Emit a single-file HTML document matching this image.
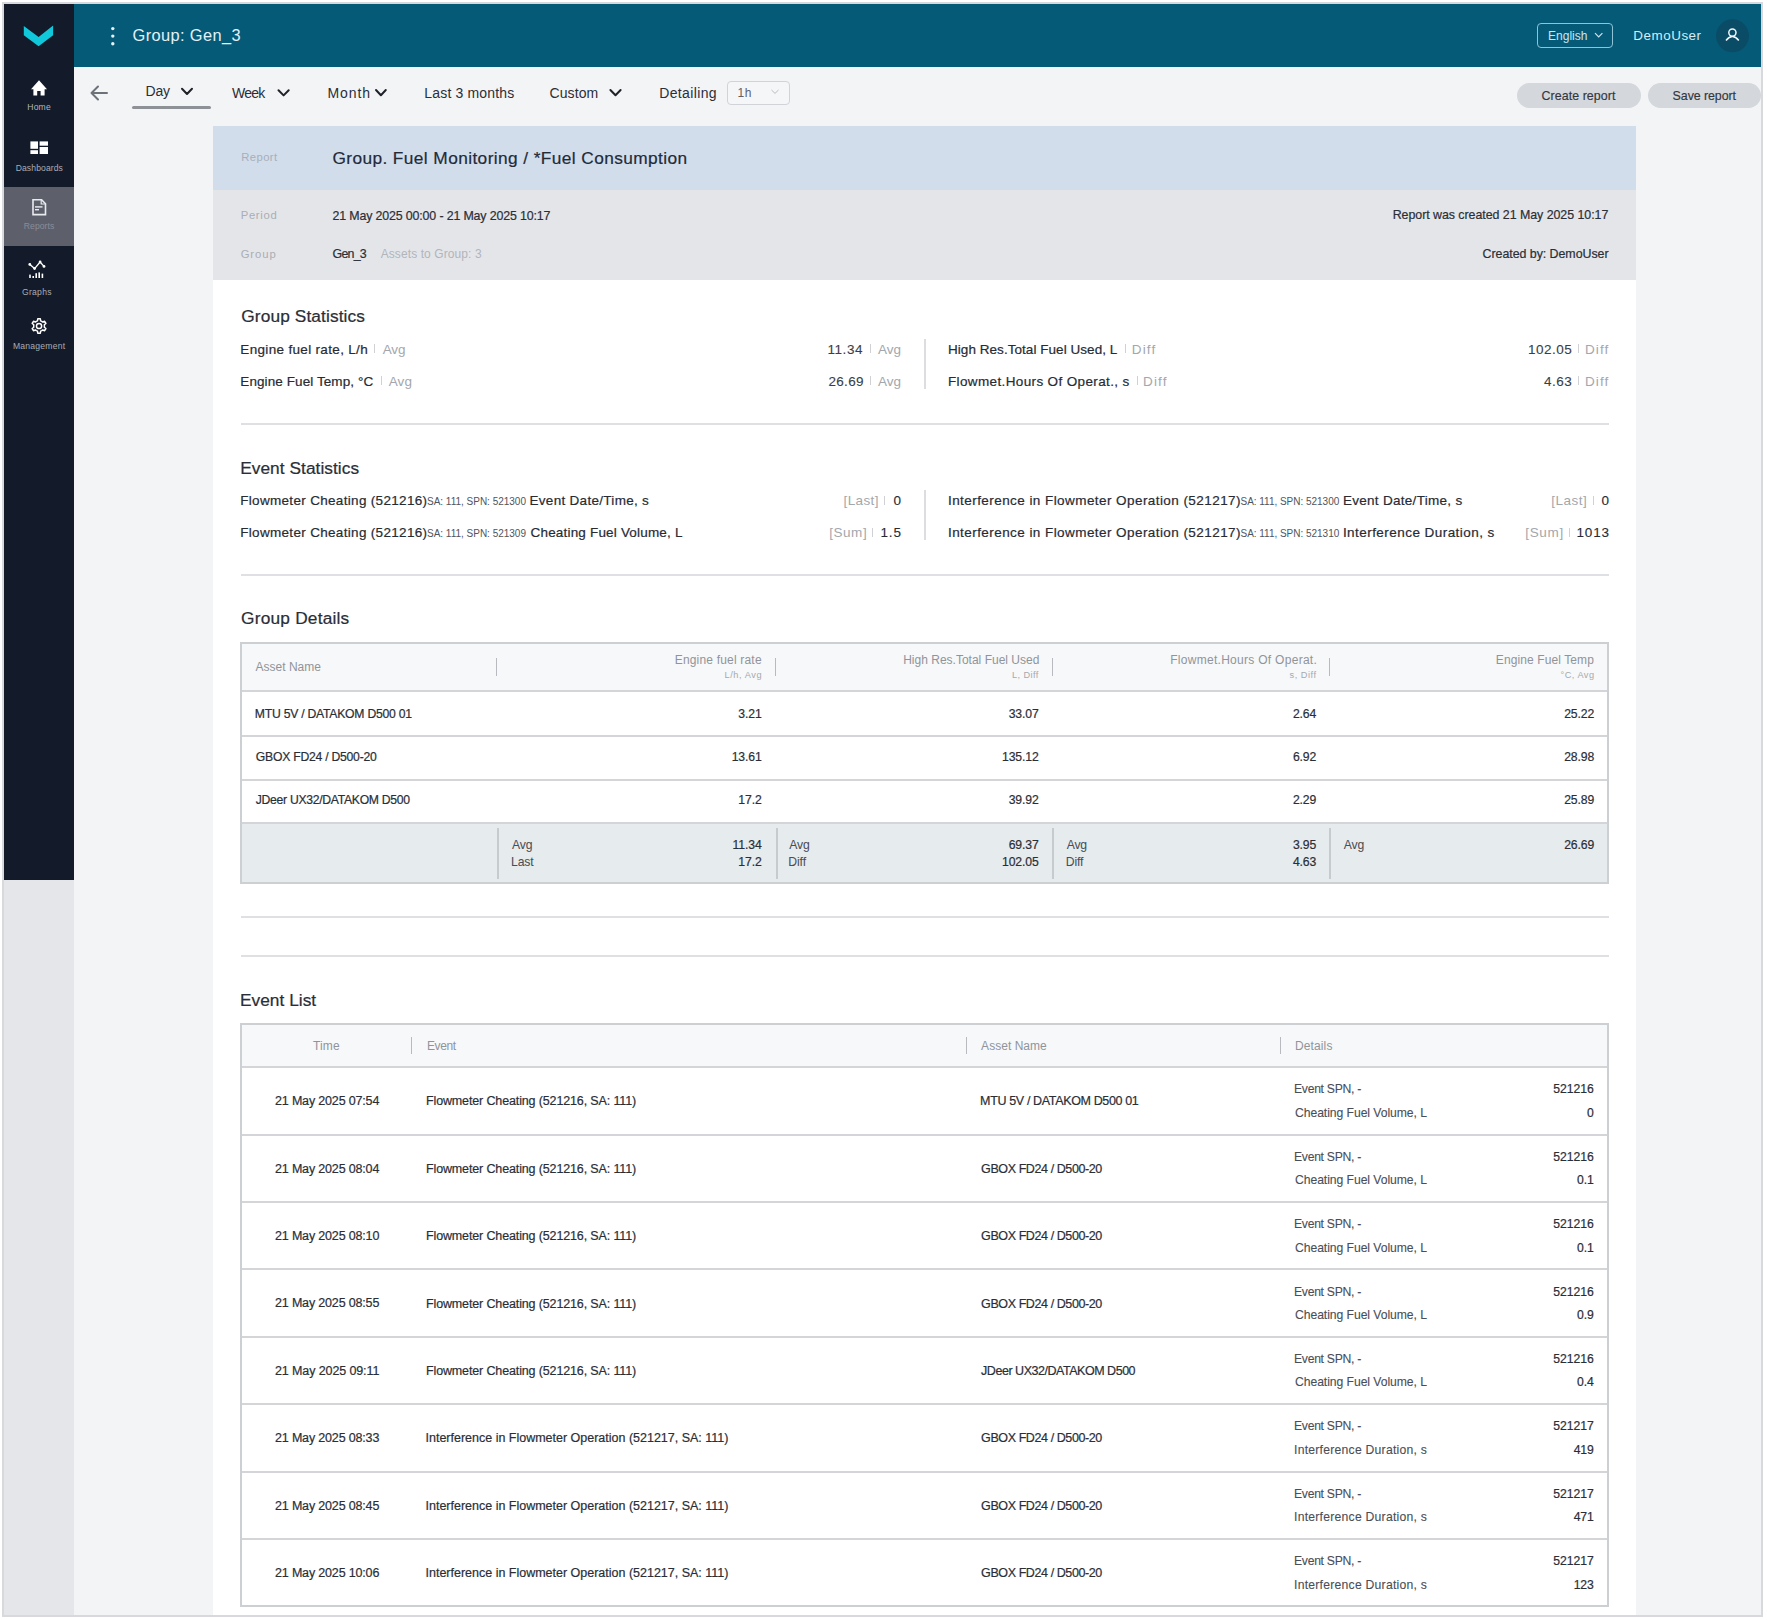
<!DOCTYPE html>
<html><head><meta charset="utf-8"><style>
html,body{margin:0;padding:0;}
body{width:1767px;height:1620px;position:relative;overflow:hidden;background:#fff;font-family:"Liberation Sans",sans-serif;}
.b{position:absolute;}
.t{position:absolute;white-space:pre;line-height:1;font-family:"Liberation Sans",sans-serif;}
.sep{position:absolute;width:1px;background:#cfd1d5;}
.hl{position:absolute;height:2px;background:#dfe0e3;}

</style></head><body>
<!-- frame -->
<div class=b style="left:2px;top:2px;width:1761px;height:1615px;background:#d8d9dc"></div>
<!-- page bg -->
<div class=b style="left:74px;top:67px;width:1687px;height:1548px;background:#f3f4f6"></div>
<!-- sidebar -->
<div class=b style="left:4px;top:4px;width:70px;height:876px;background:#131a29"></div>
<div class=b style="left:4px;top:880px;width:70px;height:735px;background:#e5e6ea"></div>
<div class=b style="left:4px;top:187px;width:70px;height:59px;background:#5d606b"></div>
<!-- header -->
<div class=b style="left:74px;top:4px;width:1687px;height:63px;background:#055a77"></div>
<!-- panel -->
<div class=b style="left:213px;top:126px;width:1423px;height:64px;background:#d2ddec"></div>
<div class=b style="left:213px;top:190px;width:1423px;height:90px;background:#e4e5e9"></div>
<div class=b style="left:213px;top:280px;width:1423px;height:1335px;background:#ffffff"></div>

<!-- logo -->
<svg class=b style="left:0;top:0" width="80" height="60"><polygon points="23.8,25.9 38.6,37 53.1,25.6 53.1,35.2 38.6,46.3 23.8,35.2" fill="#10c8da"/></svg>
<!-- sidebar icons -->
<svg class=b style="left:0;top:0" width="74" height="360">
 <g fill="#ffffff">
  <polygon points="31,89.2 39,80.2 47,89.2 44.6,89.2 44.6,95.4 40.6,95.4 40.6,91 37.2,91 37.2,95.4 33.4,95.4 33.4,89.2"/>
  <rect x="30.4" y="141.4" width="7.6" height="7.4"/>
  <rect x="30.4" y="150.2" width="7.6" height="3.8"/>
  <rect x="39.6" y="141.4" width="8.4" height="4.3"/>
  <rect x="39.6" y="147" width="8.4" height="7"/>
 </g>
 <g fill="none" stroke="#e9eaee" stroke-width="1.6">
  <path d="M33,199.8 H41.6 L45.5,203.8 V214.6 H33 Z"/>
  <path d="M41.2,200 V204 H45.3" stroke-width="1.2"/>
 </g>
 <g fill="#e9eaee"><rect x="35" y="206.2" width="7.5" height="1.4"/><rect x="35" y="209" width="4" height="1.4"/></g>
 <g fill="none" stroke="#ffffff" stroke-width="1.5" stroke-linecap="round" stroke-linejoin="round">
  <path d="M29.8,264.4 L34.6,268.6 L40.1,262 L44,266.4" stroke-width="1.3"/>
 </g>
 <g fill="#ffffff"><circle cx="29.8" cy="264.4" r="1.4"/><circle cx="34.6" cy="268.6" r="1.4"/><circle cx="40.1" cy="262" r="1.4"/><circle cx="44" cy="266.4" r="1.4"/></g>
 <g fill="#ffffff"><rect x="29.2" y="274.6" width="1.6" height="3.4"/><rect x="32.4" y="276" width="1.6" height="2"/><rect x="35.4" y="273.2" width="1.6" height="4.8"/><rect x="38.4" y="272.4" width="1.6" height="5.6"/><rect x="41.6" y="273.6" width="1.6" height="4.4"/></g>
 <g fill="none" stroke="#ffffff" stroke-width="1.5">
  <path d="M41.75,321.32 L40.63,320.84 L40.32,318.81 L37.78,318.81 L37.47,320.84 L36.35,321.32 L35.37,322.05 L33.46,321.31 L32.19,323.50 L33.79,324.79 L33.65,326.00 L33.79,327.21 L32.19,328.50 L33.46,330.69 L35.37,329.95 L36.35,330.68 L37.47,331.16 L37.78,333.19 L40.32,333.19 L40.63,331.16 L41.75,330.68 L42.73,329.95 L44.64,330.69 L45.91,328.50 L44.31,327.21 L44.45,326.00 L44.31,324.79 L45.91,323.50 L44.64,321.31 L42.73,322.05 Z" stroke-linejoin="round"/>
  <circle cx="39.05" cy="326" r="2.6"/>
 </g>
</svg>
<!-- kebab -->
<svg class=b style="left:100px;top:20px" width="30" height="30"><g fill="#e6f2f7"><circle cx="12.8" cy="8.6" r="1.7"/><circle cx="12.8" cy="16.1" r="1.7"/><circle cx="12.8" cy="23.7" r="1.7"/></g></svg>
<!-- english button -->
<div class=b style="left:1537px;top:23px;width:74px;height:23px;border:1.2px solid #8fc3d6;border-radius:4px"></div>
<svg class=b style="left:1590px;top:28px" width="16" height="16"><path d="M5,5.2 L8.7,9 L12.4,5.2" fill="none" stroke="#cde4ee" stroke-width="1.2"/></svg>
<!-- avatar -->
<svg class=b style="left:1710px;top:13px" width="46" height="46"><circle cx="22.5" cy="22.8" r="16.5" fill="#0a4c66"/><g fill="none" stroke="#f0f6f9" stroke-width="1.5"><circle cx="22.4" cy="19.6" r="3.6"/><path d="M16,27.4 Q22.4,19.8 28.8,27.4"/></g></svg>
<!-- toolbar -->
<svg class=b style="left:74px;top:60px" width="760" height="60">
 <g fill="none" stroke="#6d7178" stroke-width="2" stroke-linecap="round" stroke-linejoin="round"><path d="M33,33 H17.5 M24,26.5 L17.5,33 L24,39.5"/></g>
 <g fill="none" stroke="#1f2228" stroke-width="2" stroke-linecap="round" stroke-linejoin="round">
  <path d="M108,28.8 L113,34 L118,28.8"/>
  <path d="M204.5,30.2 L209.6,35.4 L214.7,30.2"/>
  <path d="M302,30 L306.9,35.2 L311.8,30"/>
  <path d="M536.4,30 L541.5,35.2 L546.6,30"/>
 </g>
</svg>
<div class=b style="left:132px;top:106px;width:79px;height:3px;border-radius:2px;background:#8e9196"></div>
<div class=b style="left:726.5px;top:80.5px;width:63px;height:24px;border:1px solid #d0d3d7;border-radius:4px;background:#f5f6f8;box-sizing:border-box"></div>
<svg class=b style="left:766px;top:86px" width="20" height="14"><path d="M5.5,4 L9,7.4 L12.5,4" fill="none" stroke="#b8bcc2" stroke-width="1"/></svg>
<div class=b style="left:1517px;top:83px;width:124px;height:25px;border-radius:13px;background:#d4d7db"></div>
<div class=b style="left:1648px;top:83px;width:113px;height:25px;border-radius:13px;background:#d4d7db"></div>

<!-- stats dividers & hrs -->
<div class=b style="left:924px;top:339px;width:2px;height:50px;background:#dcdde1"></div>
<div class=b style="left:924px;top:490px;width:2px;height:50px;background:#dcdde1"></div>
<div class=hl style="left:241px;top:423px;width:1368px"></div>
<div class=hl style="left:241px;top:574px;width:1368px"></div>
<div class=hl style="left:241px;top:916px;width:1368px"></div>
<div class=hl style="left:241px;top:955px;width:1368px"></div>

<!-- group details table -->
<div class=b style="left:240px;top:642px;width:1369px;height:242px;border:2px solid #cdd0d3;box-sizing:border-box;background:#fff"></div>
<div class=b style="left:242px;top:644px;width:1365px;height:46px;background:#f7f8f9"></div>
<div class=b style="left:242px;top:690px;width:1365px;height:2px;background:#d3d5d8"></div>
<div class=b style="left:242px;top:734.5px;width:1365px;height:2px;background:#d3d5d8"></div>
<div class=b style="left:242px;top:778.5px;width:1365px;height:2px;background:#d3d5d8"></div>
<div class=b style="left:242px;top:822px;width:1365px;height:2px;background:#d3d5d8"></div>
<div class=b style="left:242px;top:824px;width:1365px;height:58px;background:#e6ebee"></div>
<div class=sep style="left:496.3px;top:658px;height:18px;background:#b7bbc0"></div>
<div class=sep style="left:775.4px;top:658px;height:18px;background:#b7bbc0"></div>
<div class=sep style="left:1052.3px;top:658px;height:18px;background:#b7bbc0"></div>
<div class=sep style="left:1329px;top:658px;height:18px;background:#b7bbc0"></div>
<div class=b style="left:497px;top:828px;width:2px;height:51px;background:#c7cacf"></div>
<div class=b style="left:775.6px;top:828px;width:2px;height:51px;background:#c7cacf"></div>
<div class=b style="left:1052.3px;top:828px;width:2px;height:51px;background:#c7cacf"></div>
<div class=b style="left:1329.4px;top:828px;width:2px;height:51px;background:#c7cacf"></div>

<!-- event list table -->
<div class=b style="left:240px;top:1023px;width:1369px;height:584px;border:2px solid #cdd0d3;box-sizing:border-box;background:#fff"></div>
<div class=b style="left:242px;top:1025px;width:1365px;height:41px;background:#f7f8f9"></div>
<div class=b style="left:242px;top:1066px;width:1365px;height:2px;background:#d3d5d8"></div>
<div class=b style="left:242px;top:1133.5px;width:1365px;height:2px;background:#d3d5d8"></div>
<div class=b style="left:242px;top:1200.9px;width:1365px;height:2px;background:#d3d5d8"></div>
<div class=b style="left:242px;top:1268.3px;width:1365px;height:2px;background:#d3d5d8"></div>
<div class=b style="left:242px;top:1335.7px;width:1365px;height:2px;background:#d3d5d8"></div>
<div class=b style="left:242px;top:1403.1px;width:1365px;height:2px;background:#d3d5d8"></div>
<div class=b style="left:242px;top:1470.5px;width:1365px;height:2px;background:#d3d5d8"></div>
<div class=b style="left:242px;top:1537.9px;width:1365px;height:2px;background:#d3d5d8"></div>
<div class=sep style="left:411.2px;top:1037px;height:17px;background:#b7bbc0"></div>
<div class=sep style="left:966.4px;top:1037px;height:17px;background:#b7bbc0"></div>
<div class=sep style="left:1280.1px;top:1037px;height:17px;background:#b7bbc0"></div>

<div class=sep style="left:374.0px;top:344px;height:9px"></div><div class=sep style="left:869.9px;top:344px;height:9px"></div><div class=sep style="left:380.9px;top:376px;height:9px"></div><div class=sep style="left:869.9px;top:376px;height:9px"></div><div class=sep style="left:1124.5px;top:344px;height:9px"></div><div class=sep style="left:1577.5px;top:344px;height:9px"></div><div class=sep style="left:1136.5px;top:376px;height:9px"></div><div class=sep style="left:1577.5px;top:376px;height:9px"></div><div class=sep style="left:884.1px;top:495.8px;height:9.0px"></div><div class=sep style="left:872.3px;top:527.5px;height:9.0px"></div><div class=sep style="left:1592.8px;top:495.8px;height:9.0px"></div><div class=sep style="left:1569.3px;top:527.5px;height:9.0px"></div>
<span class=t style="left:27.30px;top:103.42px;font-size:8.6px;letter-spacing:0.152px;color:#b3b7bf;">Home</span>
<span class=t style="left:15.70px;top:163.72px;font-size:8.6px;letter-spacing:0.095px;color:#a9adb6;">Dashboards</span>
<span class=t style="left:23.80px;top:222.22px;font-size:8.6px;letter-spacing:0.068px;color:#898d98;">Reports</span>
<span class=t style="left:22.00px;top:287.52px;font-size:8.6px;letter-spacing:0.263px;color:#a9adb6;">Graphs</span>
<span class=t style="left:12.90px;top:341.92px;font-size:8.6px;letter-spacing:0.225px;color:#a9adb6;">Management</span>
<span class=t style="left:132.60px;top:26.92px;font-size:16.4px;letter-spacing:0.367px;color:#e3f1f7;">Group: Gen_3</span>
<span class=t style="left:1548.00px;top:29.74px;font-size:12px;letter-spacing:0.019px;color:#cde4ee;">English</span>
<span class=t style="left:1633.30px;top:28.86px;font-size:13.4px;letter-spacing:0.538px;color:#d8ecf4;">DemoUser</span>
<span class=t style="left:145.60px;top:83.85px;font-size:14px;letter-spacing:-0.248px;color:#2b2e36;">Day</span>
<span class=t style="left:232.00px;top:85.75px;font-size:14px;letter-spacing:-0.778px;color:#2b2e36;">Week</span>
<span class=t style="left:327.50px;top:86.15px;font-size:14px;letter-spacing:0.919px;color:#2b2e36;">Month</span>
<span class=t style="left:424.30px;top:86.15px;font-size:14px;letter-spacing:0.172px;color:#2b2e36;">Last 3 months</span>
<span class=t style="left:549.40px;top:86.15px;font-size:14px;letter-spacing:0.126px;color:#2b2e36;">Custom</span>
<span class=t style="left:659.20px;top:86.15px;font-size:14px;letter-spacing:0.364px;color:#2b2e36;">Detailing</span>
<span class=t style="left:737.60px;top:87.14px;font-size:12px;letter-spacing:0.526px;color:#5d6168;">1h</span>
<span class=t style="left:1541.60px;top:89.60px;font-size:12.4px;letter-spacing:0.062px;color:#33363d;-webkit-text-stroke:0.15px #33363d;">Create report</span>
<span class=t style="left:1672.60px;top:89.60px;font-size:12.4px;letter-spacing:-0.061px;color:#33363d;-webkit-text-stroke:0.15px #33363d;">Save report</span>
<span class=t style="left:241.20px;top:152.03px;font-size:11.3px;letter-spacing:0.406px;color:#a7afba;">Report</span>
<span class=t style="left:332.40px;top:149.96px;font-size:17.3px;letter-spacing:0.407px;color:#232a38;-webkit-text-stroke:0.2px #232a38;">Group. Fuel Monitoring / *Fuel Consumption</span>
<span class=t style="left:240.70px;top:209.93px;font-size:11.3px;letter-spacing:0.666px;color:#a9aeb5;">Period</span>
<span class=t style="left:332.50px;top:209.50px;font-size:12.4px;letter-spacing:-0.147px;color:#2a2e36;-webkit-text-stroke:0.2px #2a2e36;">21 May 2025 00:00 - 21 May 2025 10:17</span>
<span class=t style="left:240.70px;top:248.73px;font-size:11.3px;letter-spacing:0.896px;color:#a9aeb5;">Group</span>
<span class=t style="left:332.50px;top:247.70px;font-size:12.4px;letter-spacing:-0.753px;color:#2a2e36;-webkit-text-stroke:0.2px #2a2e36;">Gen_3</span>
<span class=t style="left:380.70px;top:248.04px;font-size:12px;letter-spacing:0.088px;color:#b1b5bb;">Assets to Group: 3</span>
<span class=t style="left:1392.70px;top:208.60px;font-size:12.4px;letter-spacing:-0.039px;color:#2a2e36;-webkit-text-stroke:0.2px #2a2e36;">Report was created 21 May 2025 10:17</span>
<span class=t style="left:1482.60px;top:247.70px;font-size:12.4px;letter-spacing:-0.041px;color:#2a2e36;-webkit-text-stroke:0.2px #2a2e36;">Created by: DemoUser</span>
<span class=t style="left:241.30px;top:307.96px;font-size:17.3px;letter-spacing:0.111px;color:#2a2e36;-webkit-text-stroke:0.22px #2a2e36;">Group Statistics</span>
<span class=t style="left:240.30px;top:342.77px;font-size:13.5px;letter-spacing:0.329px;color:#272b33;-webkit-text-stroke:0.2px #272b33;">Engine fuel rate, L/h</span>
<span class=t style="left:382.70px;top:342.77px;font-size:13.5px;letter-spacing:-0.155px;color:#a3a7ad;">Avg</span>
<span class=t style="left:827.40px;top:342.77px;font-size:13.5px;letter-spacing:0.582px;color:#3a3e46;-webkit-text-stroke:0.1px #3a3e46;">11.34</span>
<span class=t style="left:878.00px;top:342.77px;font-size:13.5px;letter-spacing:-0.005px;color:#a3a7ad;">Avg</span>
<span class=t style="left:240.30px;top:374.57px;font-size:13.5px;letter-spacing:0.089px;color:#272b33;-webkit-text-stroke:0.2px #272b33;">Engine Fuel Temp, °C</span>
<span class=t style="left:388.70px;top:374.57px;font-size:13.5px;letter-spacing:0.145px;color:#a3a7ad;">Avg</span>
<span class=t style="left:828.40px;top:374.57px;font-size:13.5px;letter-spacing:0.331px;color:#3a3e46;-webkit-text-stroke:0.1px #3a3e46;">26.69</span>
<span class=t style="left:878.00px;top:374.57px;font-size:13.5px;letter-spacing:-0.005px;color:#a3a7ad;">Avg</span>
<span class=t style="left:948.00px;top:342.77px;font-size:13.5px;letter-spacing:0.047px;color:#272b33;-webkit-text-stroke:0.2px #272b33;">High Res.Total Fuel Used, L</span>
<span class=t style="left:1131.80px;top:342.77px;font-size:13.5px;letter-spacing:1.115px;color:#a3a7ad;">Diff</span>
<span class=t style="left:1528.00px;top:342.77px;font-size:13.5px;letter-spacing:0.503px;color:#3a3e46;-webkit-text-stroke:0.1px #3a3e46;">102.05</span>
<span class=t style="left:1585.00px;top:342.77px;font-size:13.5px;letter-spacing:1.082px;color:#a3a7ad;">Diff</span>
<span class=t style="left:948.00px;top:374.57px;font-size:13.5px;letter-spacing:0.364px;color:#272b33;-webkit-text-stroke:0.2px #272b33;">Flowmet.Hours Of Operat., s</span>
<span class=t style="left:1143.00px;top:374.57px;font-size:13.5px;letter-spacing:1.148px;color:#a3a7ad;">Diff</span>
<span class=t style="left:1544.00px;top:374.57px;font-size:13.5px;letter-spacing:0.511px;color:#3a3e46;-webkit-text-stroke:0.1px #3a3e46;">4.63</span>
<span class=t style="left:1585.00px;top:374.57px;font-size:13.5px;letter-spacing:1.082px;color:#a3a7ad;">Diff</span>
<span class=t style="left:240.20px;top:459.96px;font-size:17.3px;letter-spacing:0.047px;color:#2a2e36;-webkit-text-stroke:0.22px #2a2e36;">Event Statistics</span>
<span class=t style="left:240.20px;top:493.87px;font-size:13.5px;letter-spacing:0.319px;color:#272b33;-webkit-text-stroke:0.2px #272b33;">Flowmeter Cheating (521216)</span>
<span class=t style="left:427.00px;top:496.84px;font-size:10px;letter-spacing:-0.009px;color:#50545c;">SA: 111, SPN: 521300</span>
<span class=t style="left:529.50px;top:493.87px;font-size:13.5px;letter-spacing:0.298px;color:#272b33;-webkit-text-stroke:0.2px #272b33;">Event Date/Time, s</span>
<span class=t style="left:843.50px;top:493.87px;font-size:13.5px;letter-spacing:0.386px;color:#a3a7ad;">[Last]</span>
<span class=t style="left:893.50px;top:493.87px;font-size:13.5px;letter-spacing:0.000px;color:#272b33;-webkit-text-stroke:0.1px #272b33;">0</span>
<span class=t style="left:240.20px;top:525.57px;font-size:13.5px;letter-spacing:0.319px;color:#272b33;-webkit-text-stroke:0.2px #272b33;">Flowmeter Cheating (521216)</span>
<span class=t style="left:427.00px;top:528.53px;font-size:10px;letter-spacing:-0.009px;color:#50545c;">SA: 111, SPN: 521309</span>
<span class=t style="left:530.50px;top:525.57px;font-size:13.5px;letter-spacing:0.185px;color:#272b33;-webkit-text-stroke:0.2px #272b33;">Cheating Fuel Volume, L</span>
<span class=t style="left:829.20px;top:525.57px;font-size:13.5px;letter-spacing:0.548px;color:#a3a7ad;">[Sum]</span>
<span class=t style="left:880.40px;top:525.57px;font-size:13.5px;letter-spacing:0.921px;color:#272b33;-webkit-text-stroke:0.1px #272b33;">1.5</span>
<span class=t style="left:948.00px;top:493.87px;font-size:13.5px;letter-spacing:0.433px;color:#272b33;-webkit-text-stroke:0.2px #272b33;">Interference in Flowmeter Operation (521217)</span>
<span class=t style="left:1240.50px;top:496.84px;font-size:10px;letter-spacing:-0.020px;color:#50545c;">SA: 111, SPN: 521300</span>
<span class=t style="left:1342.90px;top:493.87px;font-size:13.5px;letter-spacing:0.292px;color:#272b33;-webkit-text-stroke:0.2px #272b33;">Event Date/Time, s</span>
<span class=t style="left:1551.20px;top:493.87px;font-size:13.5px;letter-spacing:0.506px;color:#a3a7ad;">[Last]</span>
<span class=t style="left:1601.50px;top:493.87px;font-size:13.5px;letter-spacing:0.000px;color:#272b33;-webkit-text-stroke:0.1px #272b33;">0</span>
<span class=t style="left:948.00px;top:525.57px;font-size:13.5px;letter-spacing:0.433px;color:#272b33;-webkit-text-stroke:0.2px #272b33;">Interference in Flowmeter Operation (521217)</span>
<span class=t style="left:1240.50px;top:528.53px;font-size:10px;letter-spacing:-0.020px;color:#50545c;">SA: 111, SPN: 521310</span>
<span class=t style="left:1342.90px;top:525.57px;font-size:13.5px;letter-spacing:0.451px;color:#272b33;-webkit-text-stroke:0.2px #272b33;">Interference Duration, s</span>
<span class=t style="left:1525.20px;top:525.57px;font-size:13.5px;letter-spacing:0.698px;color:#a3a7ad;">[Sum]</span>
<span class=t style="left:1576.50px;top:525.57px;font-size:13.5px;letter-spacing:0.825px;color:#272b33;-webkit-text-stroke:0.1px #272b33;">1013</span>
<span class=t style="left:241.00px;top:610.36px;font-size:17.3px;letter-spacing:0.216px;color:#2a2e36;-webkit-text-stroke:0.22px #2a2e36;">Group Details</span>
<span class=t style="left:255.40px;top:661.04px;font-size:12px;letter-spacing:0.024px;color:#8f949b;">Asset Name</span>
<span class=t style="left:674.70px;top:654.04px;font-size:12px;letter-spacing:0.188px;color:#8f949b;">Engine fuel rate</span>
<span class=t style="left:724.50px;top:671.21px;font-size:9.2px;letter-spacing:0.567px;color:#a5a9af;">L/h, Avg</span>
<span class=t style="left:903.20px;top:654.04px;font-size:12px;letter-spacing:0.005px;color:#8f949b;">High Res.Total Fuel Used</span>
<span class=t style="left:1012.00px;top:671.21px;font-size:9.2px;letter-spacing:0.404px;color:#a5a9af;">L, Diff</span>
<span class=t style="left:1170.20px;top:654.04px;font-size:12px;letter-spacing:0.287px;color:#8f949b;">Flowmet.Hours Of Operat.</span>
<span class=t style="left:1289.60px;top:671.21px;font-size:9.2px;letter-spacing:0.523px;color:#a5a9af;">s, Diff</span>
<span class=t style="left:1495.80px;top:654.04px;font-size:12px;letter-spacing:0.104px;color:#8f949b;">Engine Fuel Temp</span>
<span class=t style="left:1560.60px;top:671.21px;font-size:9.2px;letter-spacing:0.472px;color:#a5a9af;">°C, Avg</span>
<span class=t style="left:254.80px;top:707.57px;font-size:12.2px;letter-spacing:-0.239px;color:#2a2e36;-webkit-text-stroke:0.2px #2a2e36;">MTU 5V / DATAKOM D500 01</span>
<span class=t style="left:738.35px;top:707.57px;font-size:12.2px;letter-spacing:-0.132px;color:#2a2e36;-webkit-text-stroke:0.2px #2a2e36;">3.21</span>
<span class=t style="left:1008.69px;top:707.57px;font-size:12.2px;letter-spacing:-0.127px;color:#2a2e36;-webkit-text-stroke:0.2px #2a2e36;">33.07</span>
<span class=t style="left:1292.95px;top:707.57px;font-size:12.2px;letter-spacing:-0.132px;color:#2a2e36;-webkit-text-stroke:0.2px #2a2e36;">2.64</span>
<span class=t style="left:1564.19px;top:707.57px;font-size:12.2px;letter-spacing:-0.127px;color:#2a2e36;-webkit-text-stroke:0.2px #2a2e36;">25.22</span>
<span class=t style="left:255.80px;top:750.57px;font-size:12.2px;letter-spacing:-0.241px;color:#2a2e36;-webkit-text-stroke:0.2px #2a2e36;">GBOX FD24 / D500-20</span>
<span class=t style="left:731.69px;top:750.57px;font-size:12.2px;letter-spacing:-0.127px;color:#2a2e36;-webkit-text-stroke:0.2px #2a2e36;">13.61</span>
<span class=t style="left:1002.02px;top:750.57px;font-size:12.2px;letter-spacing:-0.124px;color:#2a2e36;-webkit-text-stroke:0.2px #2a2e36;">135.12</span>
<span class=t style="left:1292.95px;top:750.57px;font-size:12.2px;letter-spacing:-0.132px;color:#2a2e36;-webkit-text-stroke:0.2px #2a2e36;">6.92</span>
<span class=t style="left:1564.19px;top:750.57px;font-size:12.2px;letter-spacing:-0.127px;color:#2a2e36;-webkit-text-stroke:0.2px #2a2e36;">28.98</span>
<span class=t style="left:255.80px;top:794.07px;font-size:12.2px;letter-spacing:-0.294px;color:#2a2e36;-webkit-text-stroke:0.2px #2a2e36;">JDeer UX32/DATAKOM D500</span>
<span class=t style="left:738.35px;top:794.07px;font-size:12.2px;letter-spacing:-0.132px;color:#2a2e36;-webkit-text-stroke:0.2px #2a2e36;">17.2</span>
<span class=t style="left:1008.69px;top:794.07px;font-size:12.2px;letter-spacing:-0.127px;color:#2a2e36;-webkit-text-stroke:0.2px #2a2e36;">39.92</span>
<span class=t style="left:1292.95px;top:794.07px;font-size:12.2px;letter-spacing:-0.132px;color:#2a2e36;-webkit-text-stroke:0.2px #2a2e36;">2.29</span>
<span class=t style="left:1564.19px;top:794.07px;font-size:12.2px;letter-spacing:-0.127px;color:#2a2e36;-webkit-text-stroke:0.2px #2a2e36;">25.89</span>
<span class=t style="left:512.00px;top:839.27px;font-size:12.2px;letter-spacing:-0.166px;color:#4a4e56;-webkit-text-stroke:0.05px #4a4e56;">Avg</span>
<span class=t style="left:732.58px;top:839.27px;font-size:12.2px;letter-spacing:-0.124px;color:#2a2e36;-webkit-text-stroke:0.2px #2a2e36;">11.34</span>
<span class=t style="left:511.00px;top:855.97px;font-size:12.2px;letter-spacing:-0.125px;color:#4a4e56;-webkit-text-stroke:0.05px #4a4e56;">Last</span>
<span class=t style="left:738.35px;top:855.97px;font-size:12.2px;letter-spacing:-0.132px;color:#2a2e36;-webkit-text-stroke:0.2px #2a2e36;">17.2</span>
<span class=t style="left:789.30px;top:839.27px;font-size:12.2px;letter-spacing:-0.166px;color:#4a4e56;-webkit-text-stroke:0.05px #4a4e56;">Avg</span>
<span class=t style="left:1008.69px;top:839.27px;font-size:12.2px;letter-spacing:-0.127px;color:#2a2e36;-webkit-text-stroke:0.2px #2a2e36;">69.37</span>
<span class=t style="left:788.30px;top:855.97px;font-size:12.2px;letter-spacing:-0.098px;color:#4a4e56;-webkit-text-stroke:0.05px #4a4e56;">Diff</span>
<span class=t style="left:1002.02px;top:855.97px;font-size:12.2px;letter-spacing:-0.124px;color:#2a2e36;-webkit-text-stroke:0.2px #2a2e36;">102.05</span>
<span class=t style="left:1066.70px;top:839.27px;font-size:12.2px;letter-spacing:-0.166px;color:#4a4e56;-webkit-text-stroke:0.05px #4a4e56;">Avg</span>
<span class=t style="left:1292.95px;top:839.27px;font-size:12.2px;letter-spacing:-0.132px;color:#2a2e36;-webkit-text-stroke:0.2px #2a2e36;">3.95</span>
<span class=t style="left:1065.70px;top:855.97px;font-size:12.2px;letter-spacing:-0.098px;color:#4a4e56;-webkit-text-stroke:0.05px #4a4e56;">Diff</span>
<span class=t style="left:1292.95px;top:855.97px;font-size:12.2px;letter-spacing:-0.132px;color:#2a2e36;-webkit-text-stroke:0.2px #2a2e36;">4.63</span>
<span class=t style="left:1343.80px;top:839.27px;font-size:12.2px;letter-spacing:-0.166px;color:#4a4e56;-webkit-text-stroke:0.05px #4a4e56;">Avg</span>
<span class=t style="left:1564.19px;top:839.27px;font-size:12.2px;letter-spacing:-0.127px;color:#2a2e36;-webkit-text-stroke:0.2px #2a2e36;">26.69</span>
<span class=t style="left:240.00px;top:991.56px;font-size:17.3px;letter-spacing:0.024px;color:#2a2e36;-webkit-text-stroke:0.22px #2a2e36;">Event List</span>
<span class=t style="left:313.00px;top:1039.64px;font-size:12px;letter-spacing:0.151px;color:#8f949b;">Time</span>
<span class=t style="left:427.00px;top:1039.64px;font-size:12px;letter-spacing:-0.413px;color:#8f949b;">Event</span>
<span class=t style="left:981.10px;top:1039.64px;font-size:12px;letter-spacing:0.035px;color:#8f949b;">Asset Name</span>
<span class=t style="left:1294.90px;top:1039.64px;font-size:12px;letter-spacing:0.137px;color:#8f949b;">Details</span>
<span class=t style="left:275.00px;top:1095.22px;font-size:12.5px;letter-spacing:-0.167px;color:#2a2e36;-webkit-text-stroke:0.2px #2a2e36;">21 May 2025 07:54</span>
<span class=t style="left:426.00px;top:1095.32px;font-size:12.5px;letter-spacing:-0.136px;color:#2a2e36;-webkit-text-stroke:0.2px #2a2e36;">Flowmeter Cheating (521216, SA: 111)</span>
<span class=t style="left:1295.00px;top:1106.77px;font-size:12.2px;letter-spacing:-0.068px;color:#4a4e56;-webkit-text-stroke:0.1px #4a4e56;">Cheating Fuel Volume, L</span>
<span class=t style="left:1553.20px;top:1083.37px;font-size:12.2px;letter-spacing:-0.018px;color:#2a2e36;-webkit-text-stroke:0.2px #2a2e36;">521216</span>
<span class=t style="left:980.10px;top:1095.32px;font-size:12.5px;letter-spacing:-0.360px;color:#2a2e36;-webkit-text-stroke:0.2px #2a2e36;">MTU 5V / DATAKOM D500 01</span>
<span class=t style="left:1294.00px;top:1083.37px;font-size:12.2px;letter-spacing:-0.289px;color:#4a4e56;-webkit-text-stroke:0.1px #4a4e56;">Event SPN, -</span>
<span class=t style="left:1587.00px;top:1106.77px;font-size:12.2px;letter-spacing:0.000px;color:#2a2e36;-webkit-text-stroke:0.2px #2a2e36;">0</span>
<span class=t style="left:275.00px;top:1162.62px;font-size:12.5px;letter-spacing:-0.167px;color:#2a2e36;-webkit-text-stroke:0.2px #2a2e36;">21 May 2025 08:04</span>
<span class=t style="left:426.00px;top:1162.72px;font-size:12.5px;letter-spacing:-0.136px;color:#2a2e36;-webkit-text-stroke:0.2px #2a2e36;">Flowmeter Cheating (521216, SA: 111)</span>
<span class=t style="left:1295.00px;top:1174.17px;font-size:12.2px;letter-spacing:-0.068px;color:#4a4e56;-webkit-text-stroke:0.1px #4a4e56;">Cheating Fuel Volume, L</span>
<span class=t style="left:1553.20px;top:1150.77px;font-size:12.2px;letter-spacing:-0.018px;color:#2a2e36;-webkit-text-stroke:0.2px #2a2e36;">521216</span>
<span class=t style="left:981.10px;top:1162.72px;font-size:12.5px;letter-spacing:-0.410px;color:#2a2e36;-webkit-text-stroke:0.2px #2a2e36;">GBOX FD24 / D500-20</span>
<span class=t style="left:1294.00px;top:1150.77px;font-size:12.2px;letter-spacing:-0.289px;color:#4a4e56;-webkit-text-stroke:0.1px #4a4e56;">Event SPN, -</span>
<span class=t style="left:1577.12px;top:1174.17px;font-size:12.2px;letter-spacing:-0.142px;color:#2a2e36;-webkit-text-stroke:0.2px #2a2e36;">0.1</span>
<span class=t style="left:275.00px;top:1230.02px;font-size:12.5px;letter-spacing:-0.167px;color:#2a2e36;-webkit-text-stroke:0.2px #2a2e36;">21 May 2025 08:10</span>
<span class=t style="left:426.00px;top:1230.12px;font-size:12.5px;letter-spacing:-0.136px;color:#2a2e36;-webkit-text-stroke:0.2px #2a2e36;">Flowmeter Cheating (521216, SA: 111)</span>
<span class=t style="left:1295.00px;top:1241.57px;font-size:12.2px;letter-spacing:-0.068px;color:#4a4e56;-webkit-text-stroke:0.1px #4a4e56;">Cheating Fuel Volume, L</span>
<span class=t style="left:1553.20px;top:1218.17px;font-size:12.2px;letter-spacing:-0.018px;color:#2a2e36;-webkit-text-stroke:0.2px #2a2e36;">521216</span>
<span class=t style="left:981.10px;top:1230.12px;font-size:12.5px;letter-spacing:-0.410px;color:#2a2e36;-webkit-text-stroke:0.2px #2a2e36;">GBOX FD24 / D500-20</span>
<span class=t style="left:1294.00px;top:1218.17px;font-size:12.2px;letter-spacing:-0.289px;color:#4a4e56;-webkit-text-stroke:0.1px #4a4e56;">Event SPN, -</span>
<span class=t style="left:1577.12px;top:1241.57px;font-size:12.2px;letter-spacing:-0.142px;color:#2a2e36;-webkit-text-stroke:0.2px #2a2e36;">0.1</span>
<span class=t style="left:275.00px;top:1297.42px;font-size:12.5px;letter-spacing:-0.167px;color:#2a2e36;-webkit-text-stroke:0.2px #2a2e36;">21 May 2025 08:55</span>
<span class=t style="left:426.00px;top:1297.52px;font-size:12.5px;letter-spacing:-0.136px;color:#2a2e36;-webkit-text-stroke:0.2px #2a2e36;">Flowmeter Cheating (521216, SA: 111)</span>
<span class=t style="left:1295.00px;top:1308.97px;font-size:12.2px;letter-spacing:-0.068px;color:#4a4e56;-webkit-text-stroke:0.1px #4a4e56;">Cheating Fuel Volume, L</span>
<span class=t style="left:1553.20px;top:1285.57px;font-size:12.2px;letter-spacing:-0.018px;color:#2a2e36;-webkit-text-stroke:0.2px #2a2e36;">521216</span>
<span class=t style="left:981.10px;top:1297.52px;font-size:12.5px;letter-spacing:-0.410px;color:#2a2e36;-webkit-text-stroke:0.2px #2a2e36;">GBOX FD24 / D500-20</span>
<span class=t style="left:1294.00px;top:1285.57px;font-size:12.2px;letter-spacing:-0.289px;color:#4a4e56;-webkit-text-stroke:0.1px #4a4e56;">Event SPN, -</span>
<span class=t style="left:1577.12px;top:1308.97px;font-size:12.2px;letter-spacing:-0.142px;color:#2a2e36;-webkit-text-stroke:0.2px #2a2e36;">0.9</span>
<span class=t style="left:275.00px;top:1364.82px;font-size:12.5px;letter-spacing:-0.109px;color:#2a2e36;-webkit-text-stroke:0.2px #2a2e36;">21 May 2025 09:11</span>
<span class=t style="left:426.00px;top:1364.92px;font-size:12.5px;letter-spacing:-0.136px;color:#2a2e36;-webkit-text-stroke:0.2px #2a2e36;">Flowmeter Cheating (521216, SA: 111)</span>
<span class=t style="left:1295.00px;top:1376.37px;font-size:12.2px;letter-spacing:-0.068px;color:#4a4e56;-webkit-text-stroke:0.1px #4a4e56;">Cheating Fuel Volume, L</span>
<span class=t style="left:1553.20px;top:1352.97px;font-size:12.2px;letter-spacing:-0.018px;color:#2a2e36;-webkit-text-stroke:0.2px #2a2e36;">521216</span>
<span class=t style="left:981.10px;top:1364.92px;font-size:12.5px;letter-spacing:-0.473px;color:#2a2e36;-webkit-text-stroke:0.2px #2a2e36;">JDeer UX32/DATAKOM D500</span>
<span class=t style="left:1294.00px;top:1352.97px;font-size:12.2px;letter-spacing:-0.289px;color:#4a4e56;-webkit-text-stroke:0.1px #4a4e56;">Event SPN, -</span>
<span class=t style="left:1577.12px;top:1376.37px;font-size:12.2px;letter-spacing:-0.142px;color:#2a2e36;-webkit-text-stroke:0.2px #2a2e36;">0.4</span>
<span class=t style="left:275.00px;top:1432.22px;font-size:12.5px;letter-spacing:-0.167px;color:#2a2e36;-webkit-text-stroke:0.2px #2a2e36;">21 May 2025 08:33</span>
<span class=t style="left:425.50px;top:1432.32px;font-size:12.5px;letter-spacing:-0.004px;color:#2a2e36;-webkit-text-stroke:0.2px #2a2e36;">Interference in Flowmeter Operation (521217, SA: 111)</span>
<span class=t style="left:1294.00px;top:1443.77px;font-size:12.2px;letter-spacing:0.241px;color:#4a4e56;-webkit-text-stroke:0.1px #4a4e56;">Interference Duration, s</span>
<span class=t style="left:1553.20px;top:1420.37px;font-size:12.2px;letter-spacing:-0.018px;color:#2a2e36;-webkit-text-stroke:0.2px #2a2e36;">521217</span>
<span class=t style="left:981.10px;top:1432.32px;font-size:12.5px;letter-spacing:-0.410px;color:#2a2e36;-webkit-text-stroke:0.2px #2a2e36;">GBOX FD24 / D500-20</span>
<span class=t style="left:1294.00px;top:1420.37px;font-size:12.2px;letter-spacing:-0.289px;color:#4a4e56;-webkit-text-stroke:0.1px #4a4e56;">Event SPN, -</span>
<span class=t style="left:1573.78px;top:1443.77px;font-size:12.2px;letter-spacing:-0.170px;color:#2a2e36;-webkit-text-stroke:0.2px #2a2e36;">419</span>
<span class=t style="left:275.00px;top:1499.62px;font-size:12.5px;letter-spacing:-0.167px;color:#2a2e36;-webkit-text-stroke:0.2px #2a2e36;">21 May 2025 08:45</span>
<span class=t style="left:425.50px;top:1499.72px;font-size:12.5px;letter-spacing:-0.004px;color:#2a2e36;-webkit-text-stroke:0.2px #2a2e36;">Interference in Flowmeter Operation (521217, SA: 111)</span>
<span class=t style="left:1294.00px;top:1511.17px;font-size:12.2px;letter-spacing:0.241px;color:#4a4e56;-webkit-text-stroke:0.1px #4a4e56;">Interference Duration, s</span>
<span class=t style="left:1553.20px;top:1487.77px;font-size:12.2px;letter-spacing:-0.018px;color:#2a2e36;-webkit-text-stroke:0.2px #2a2e36;">521217</span>
<span class=t style="left:981.10px;top:1499.72px;font-size:12.5px;letter-spacing:-0.410px;color:#2a2e36;-webkit-text-stroke:0.2px #2a2e36;">GBOX FD24 / D500-20</span>
<span class=t style="left:1294.00px;top:1487.77px;font-size:12.2px;letter-spacing:-0.289px;color:#4a4e56;-webkit-text-stroke:0.1px #4a4e56;">Event SPN, -</span>
<span class=t style="left:1573.78px;top:1511.17px;font-size:12.2px;letter-spacing:-0.170px;color:#2a2e36;-webkit-text-stroke:0.2px #2a2e36;">471</span>
<span class=t style="left:275.00px;top:1567.02px;font-size:12.5px;letter-spacing:-0.167px;color:#2a2e36;-webkit-text-stroke:0.2px #2a2e36;">21 May 2025 10:06</span>
<span class=t style="left:425.50px;top:1567.12px;font-size:12.5px;letter-spacing:-0.004px;color:#2a2e36;-webkit-text-stroke:0.2px #2a2e36;">Interference in Flowmeter Operation (521217, SA: 111)</span>
<span class=t style="left:1294.00px;top:1578.57px;font-size:12.2px;letter-spacing:0.241px;color:#4a4e56;-webkit-text-stroke:0.1px #4a4e56;">Interference Duration, s</span>
<span class=t style="left:1553.20px;top:1555.17px;font-size:12.2px;letter-spacing:-0.018px;color:#2a2e36;-webkit-text-stroke:0.2px #2a2e36;">521217</span>
<span class=t style="left:981.10px;top:1567.12px;font-size:12.5px;letter-spacing:-0.410px;color:#2a2e36;-webkit-text-stroke:0.2px #2a2e36;">GBOX FD24 / D500-20</span>
<span class=t style="left:1294.00px;top:1555.17px;font-size:12.2px;letter-spacing:-0.289px;color:#4a4e56;-webkit-text-stroke:0.1px #4a4e56;">Event SPN, -</span>
<span class=t style="left:1573.78px;top:1578.57px;font-size:12.2px;letter-spacing:-0.170px;color:#2a2e36;-webkit-text-stroke:0.2px #2a2e36;">123</span>
</body></html>
